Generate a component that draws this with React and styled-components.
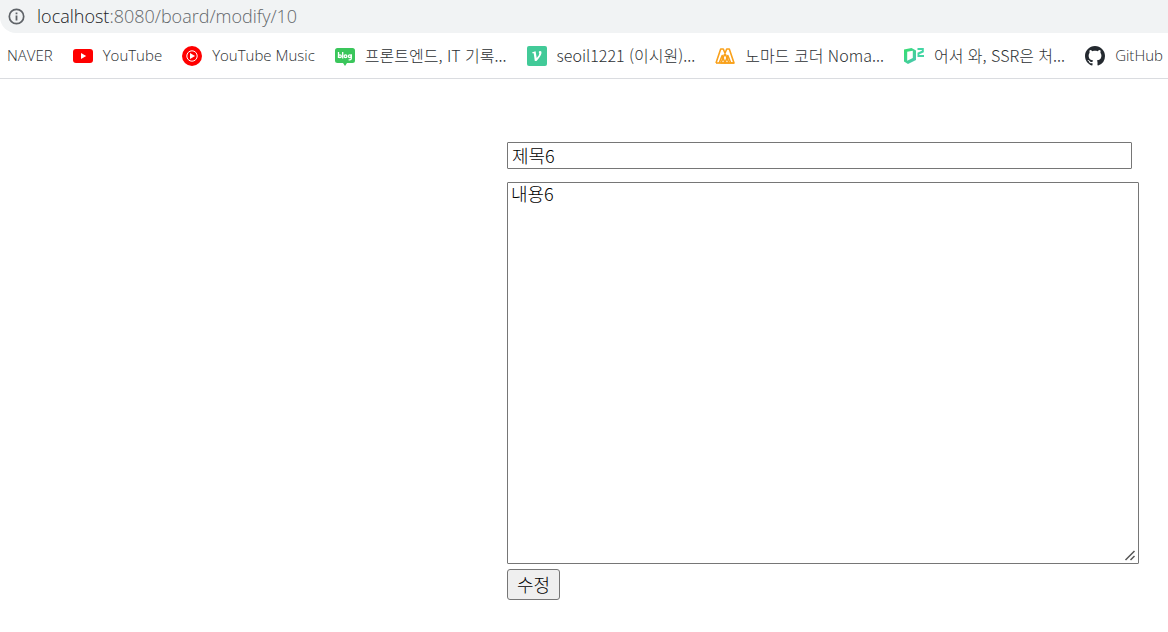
import React from "react";
import styled, { createGlobalStyle } from "styled-components";

const GlobalStyle = createGlobalStyle`
  body {
    margin: 0;
    background: #fff;
    font-family: "Noto Sans CJK KR", sans-serif;
  }
`;

const AddressBar = styled.header`
  display: flex;
  align-items: center;
  gap: 12px;
  height: 33px;
  padding-left: 8px;
  background: #f1f3f4;
  border-bottom-left-radius: 16px;
`;

const Address = styled.div`
  color: #63676b;
  font-family: "Open Sans", "Noto Sans CJK KR", sans-serif;
  font-size: 18px;
  font-weight: 300;
  line-height: 30px;
  padding-bottom: 2px;
  white-space: nowrap;
`;

const Host = styled.span`
  color: #202124;
`;

const BookmarkBar = styled.nav`
  display: flex;
  align-items: center;
  gap: 20px;
  height: 45px;
  padding: 0 7px;
  border-bottom: 1px solid #dadce0;
  overflow: hidden;
`;

const Bookmark = styled.a`
  display: flex;
  flex: none;
  align-items: center;
  gap: 10px;
  color: #2c3033;
  font-family: "Open Sans", sans-serif;
  font-size: 15px;
  font-weight: 300;
  line-height: 22px;
  text-decoration: none;
  white-space: nowrap;

  &:lang(ko) {
    font-family: "Noto Sans CJK KR", sans-serif;
    font-size: 16px;
  }
`;

const BookmarkLabel = styled.span`
  padding-bottom: 2px;
`;

const Icon = styled.svg`
  display: block;
  flex: none;
`;

const Main = styled.main`
  padding: 63px 29px 32px 507px;
`;

const Form = styled.form`
  display: flex;
  flex-direction: column;
  align-items: flex-start;
`;

const TitleInput = styled.input`
  box-sizing: border-box;
  width: calc(100% - 7px);
  height: 27px;
  margin: 0 0 13px;
  padding: 0 4px 2px;
  border: 1px solid #767676;
  border-radius: 1px;
  background: #fff;
  color: #000;
  font-family: "Noto Sans CJK KR", sans-serif;
  font-size: 18px;
  font-weight: 300;
`;

const ContentArea = styled.textarea`
  box-sizing: border-box;
  width: 100%;
  height: 382px;
  margin: 0 0 5px;
  padding: 0 3px;
  border: 1px solid #767676;
  border-radius: 1px;
  background: #fff;
  color: #000;
  font-family: "Noto Sans CJK KR", sans-serif;
  font-size: 18px;
  font-weight: 300;
  line-height: 20px;

  &::-webkit-resizer {
    background: url("data:image/svg+xml,%3Csvg xmlns='http://www.w3.org/2000/svg' width='15' height='15'%3E%3Cpath d='M2.500 12L11.500 3M7.500 12L11.500 8' stroke='%23555' stroke-width='1.500' fill='none'/%3E%3C/svg%3E") no-repeat right bottom;
  }
`;

const SubmitButton = styled.button`
  height: 31px;
  padding: 0 9px 2px;
  border: 1px solid #767676;
  border-radius: 3px;
  background: #efefef;
  color: #000;
  font-family: "Noto Sans CJK KR", sans-serif;
  font-size: 18px;
  font-weight: 300;
  line-height: 26px;
`;

const InfoIcon = () => (
  <Icon width="17" height="17" viewBox="0 0 17 17" aria-hidden="true">
    <circle cx="8.5" cy="8.5" r="7.2" fill="none" stroke="#5f6368" strokeWidth="1.7" />
    <path d="M7.6 4.5h1.8v1.8H7.6zM7.6 7.5h1.8v5H7.6z" fill="#5f6368" />
  </Icon>
);

const YouTubeIcon = () => (
  <Icon width="20" height="20" viewBox="0 0 20 20" aria-hidden="true">
    <rect y="3" width="20" height="14" rx="3" fill="#f00" />
    <path d="M8 7v6l5.2-3z" fill="#fff" />
  </Icon>
);

const YouTubeMusicIcon = () => (
  <Icon width="20" height="20" viewBox="0 0 20 20" aria-hidden="true">
    <circle cx="10" cy="10" r="10" fill="#f00" />
    <circle cx="10" cy="10" r="5.2" fill="none" stroke="#fff" strokeWidth="1" />
    <path d="M8 6.9v6.2l5-3.1z" fill="#fff" />
  </Icon>
);

const BlogIcon = () => (
  <Icon width="20" height="20" viewBox="0 0 20 20" aria-hidden="true">
    <path d="M2.5 2h15A2.5 2.5 0 0 1 20 4.5v10a2.5 2.5 0 0 1-2.5 2.5H12l-2 3-2-3H2.5A2.5 2.5 0 0 1 0 14.5v-10A2.5 2.5 0 0 1 2.5 2z" fill="#3ac65b" />
    <g fill="none" stroke="#fff" strokeWidth="1.3">
      <path d="M3.500 6v6M7.700 6v6.500M16.300 8.300v4.200q0 1.300-1.700 1.300h-1" />
      <circle cx="4.900" cy="10.300" r="1.400" />
      <circle cx="10.500" cy="10.300" r="1.400" />
      <circle cx="14.800" cy="10.300" r="1.400" />
    </g>
  </Icon>
);

const VelogIcon = () => (
  <Icon width="20" height="20" viewBox="0 0 20 20" aria-hidden="true">
    <rect width="20" height="20" rx="2" fill="#42ca98" />
    <path d="M5.300 6.300 8.600 5.200 9.700 12.100Q12.400 9 12.300 7.400L11.700 6Q12 5 13.200 5 14.800 5.100 14.500 7 14 10 9.500 15H7.800L6.700 7.300H5.300z" fill="#fff" />
  </Icon>
);

const NomadIcon = () => (
  <Icon width="20" height="20" viewBox="0 0 20 20" aria-hidden="true">
    <g fill="none" stroke="#f9a11b" strokeWidth="1.6" strokeLinejoin="round">
      <path d="M4.200 17 7.200 9.500 10 17M10 17l2.800-7.500L15.800 17" />
      <path d="M1 17 5.700 3h2.600L14 17M6 17 11.700 3h2.600L19 17z" />
      <path d="M1 17h18" />
    </g>
  </Icon>
);

const D2Icon = () => (
  <Icon width="20" height="20" viewBox="0 0 20 20" aria-hidden="true">
    <defs>
      <linearGradient id="d2-fill" x1="0" y1="0" x2="1" y2="1">
        <stop offset="0" stopColor="#35e06c" />
        <stop offset="1" stopColor="#4cc4b8" />
      </linearGradient>
    </defs>
    <path d="M0 3.500 7.500 2 12 4.500V14l-8 4-4-2.500zM3.200 5.800v9l5.600-2.800V4.800z" fill="url(#d2-fill)" fillRule="evenodd" />
    <path d="M13.500 3h5.300v2.500L14.500 7.500V10H20" fill="none" stroke="#43d6a4" strokeWidth="2" />
  </Icon>
);

const GitHubIcon = () => (
  <Icon width="20" height="20" viewBox="0 0 16 16" aria-hidden="true">
    <path fill="#24292f" fillRule="evenodd" d="M8 0C3.580 0 0 3.580 0 8c0 3.540 2.290 6.530 5.470 7.590.4.070.55-.17.55-.38 0-.19-.01-.82-.01-1.490-2.010.37-2.530-.49-2.690-.94-.09-.23-.48-.94-.82-1.130-.28-.15-.68-.52-.01-.53.63-.01 1.080.58 1.230.82.72 1.210 1.870.87 2.330.66.07-.52.28-.87.51-1.070-1.780-.2-3.640-.89-3.640-3.950 0-.87.31-1.590.82-2.150-.08-.2-.36-1.020.08-2.120 0 0 .67-.21 2.200.82.64-.18 1.320-.27 2-.27s1.360.09 2 .27c1.530-1.040 2.200-.82 2.200-.82.44 1.100.16 1.920.08 2.120.51.56.82 1.270.82 2.150 0 3.070-1.870 3.750-3.650 3.950.29.25.54.73.54 1.480 0 1.070-.01 1.930-.01 2.200 0 .21.15.46.55.38A8.010 8.010 0 0 0 16 8c0-4.420-3.580-8-8-8z" />
  </Icon>
);

const bookmarks = [
  { label: "NAVER", lang: "en" },
  { label: "YouTube", lang: "en", Glyph: YouTubeIcon },
  { label: "YouTube Music", lang: "en", Glyph: YouTubeMusicIcon },
  { label: "프론트엔드, IT 기록...", lang: "ko", Glyph: BlogIcon },
  { label: "seoil1221 (이시원)...", lang: "ko", Glyph: VelogIcon },
  { label: "노마드 코더 Noma...", lang: "ko", Glyph: NomadIcon },
  { label: "어서 와, SSR은 처...", lang: "ko", Glyph: D2Icon },
  { label: "GitHub", lang: "en", Glyph: GitHubIcon },
];

export default function App() {
  return (
    <>
      <GlobalStyle />
      <AddressBar>
        <InfoIcon />
        <Address>
          <Host>localhost</Host>:8080/board/modify/10
        </Address>
      </AddressBar>
      <BookmarkBar aria-label="Bookmarks">
        {bookmarks.map(({ label, lang, Glyph }) => (
          <Bookmark key={label} href="#" lang={lang}>
            {Glyph && <Glyph />}
            <BookmarkLabel>{label}</BookmarkLabel>
          </Bookmark>
        ))}
      </BookmarkBar>
      <Main>
        <Form onSubmit={(event) => event.preventDefault()}>
          <TitleInput type="text" aria-label="제목" defaultValue="제목6" />
          <ContentArea aria-label="내용" defaultValue="내용6" />
          <SubmitButton type="submit">수정</SubmitButton>
        </Form>
      </Main>
    </>
  );
}
